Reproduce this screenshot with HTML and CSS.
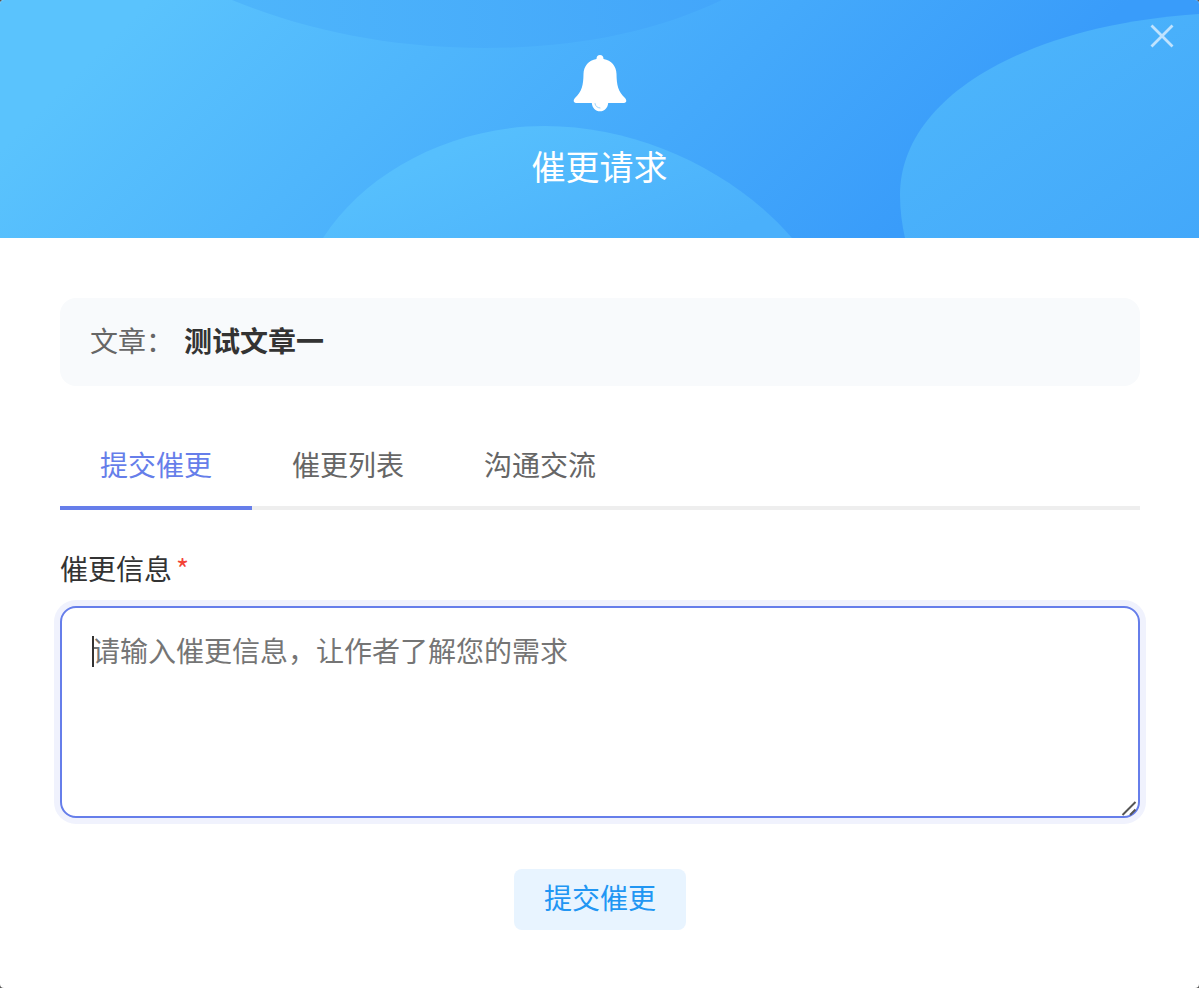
FILE: index.html
```html
<!DOCTYPE html>
<html lang="zh-CN">
<head>
<meta charset="UTF-8">
<meta name="viewport" content="width=device-width, initial-scale=1">
<title>催更请求</title>
<link rel="stylesheet" href="styles.css">
</head>
<body>
<main class="dialog" role="dialog" aria-labelledby="dialog-title">
  <header class="dialog-header">
    <svg class="header-art" viewBox="0 0 1199 238" preserveAspectRatio="none" aria-hidden="true">
      <defs>
        <linearGradient id="sky" gradientUnits="userSpaceOnUse" x1="75" y1="75" x2="565" y2="565">
          <stop offset="0" stop-color="#5ac3fd"/>
          <stop offset="1" stop-color="#399cfa"/>
        </linearGradient>
        <linearGradient id="top-blob" gradientUnits="userSpaceOnUse" x1="240" y1="0" x2="720" y2="0">
          <stop offset="0" stop-color="#4eb5fb"/>
          <stop offset="1" stop-color="#43a6fa"/>
        </linearGradient>
        <linearGradient id="low-blob" gradientUnits="userSpaceOnUse" x1="500" y1="126" x2="580" y2="300">
          <stop offset="0" stop-color="#56bffd"/>
          <stop offset="1" stop-color="#4ab0fb"/>
        </linearGradient>
        <linearGradient id="right-blob" gradientUnits="userSpaceOnUse" x1="980" y1="60" x2="1140" y2="280">
          <stop offset="0" stop-color="#4cb4fb"/>
          <stop offset="1" stop-color="#43a8fa"/>
        </linearGradient>
      </defs>
      <rect width="1199" height="238" fill="url(#sky)"/>
      <path d="M232 0C310 32 395 48 485 48C575 48 655 32 722 0Z" fill="url(#top-blob)"/>
      <path d="M323 238C365 172 452 126 545 126C640 126 735 172 792 238Z" fill="url(#low-blob)"/>
      <path d="M1199 14C1020 26 900 100 900 195C900 210 902 225 905 238H1199Z" fill="url(#right-blob)"/>
    </svg>
    <button class="close" type="button" aria-label="关闭">
      <svg viewBox="0 0 24 24" aria-hidden="true"><path d="M1.500 1.500L22.500 22.500M22.500 1.500L1.500 22.500"/></svg>
    </button>
    <svg class="bell" viewBox="0 0 54 58" aria-hidden="true">
      <path fill="#fff" d="M27 1C29.200 1 30.500 2.500 30.500 5C38.500 6.500 43.300 12 43.500 20C43.700 31 45 37.500 52 44C54.300 46.500 53.200 49 51 49H35.200C34.700 54 31.500 57.300 27 57.300C22.500 57.300 19.300 54 18.800 49H3C.8 49-.3 46.500 2 44C9 37.500 10.300 31 10.500 20C10.700 12 15.500 6.500 23.500 5C23.500 2.500 24.800 1 27 1Z"/>
      <path fill="none" stroke="#9ed4fd" stroke-width="1" stroke-linecap="round" d="M22 49.500C22.300 52.300 24.300 53.700 27 54"/>
    </svg>
    <h1 class="title" id="dialog-title">催更请求</h1>
  </header>

  <div class="dialog-body">
    <p class="article"><span class="article-label">文章：</span><strong class="article-name">测试文章一</strong></p>

    <nav class="tabs" role="tablist">
      <button class="tab tab-active" type="button" role="tab" aria-selected="true">提交催更</button>
      <button class="tab" type="button" role="tab" aria-selected="false">催更列表</button>
      <button class="tab" type="button" role="tab" aria-selected="false">沟通交流</button>
    </nav>

    <form class="form">
      <label class="label" for="message">催更信息<span class="required">*</span></label>
      <div class="field">
        <textarea class="message" id="message" required autofocus placeholder="请输入催更信息，让作者了解您的需求"></textarea>
        <span class="caret" aria-hidden="true"></span>
        <svg class="grip" viewBox="0 0 18 18" aria-hidden="true"><path d="M2.500 16L15.500 3M10 16L15.500 10.500"/></svg>
      </div>
      <button class="submit" type="button">提交催更</button>
    </form>
  </div>
</main>
</body>
</html>
```
FILE: styles.css
```css
* {
  box-sizing: border-box;
}

body {
  margin: 0;
  background: #555;
  color: #333;
  font-family: "Noto Sans CJK SC", sans-serif;
  font-size: 28px;
  line-height: 36px;
}

button,
textarea {
  font: inherit;
}

button {
  border: 0;
  cursor: pointer;
}

.dialog {
  min-height: 100vh;
  overflow: hidden;
  border-radius: 4px;
  background: #fff;
}

.dialog-header {
  position: relative;
  display: flex;
  flex-direction: column;
  align-items: center;
  gap: 32px;
  padding: 54px 24px 50px;
  color: #fff;
}

.header-art {
  position: absolute;
  inset: 0;
  width: 100%;
  height: 100%;
}

.close {
  position: absolute;
  top: 24px;
  right: 25px;
  padding: 0;
  background: none;
}

.close svg {
  display: block;
  width: 24px;
  height: 24px;
  fill: none;
  stroke: #c0e3fe;
  stroke-width: 2.8;
}

.bell {
  position: relative;
  width: 54px;
  height: 58px;
}

.title {
  position: relative;
  margin: 0;
  font-size: 34px;
  font-weight: 400;
  line-height: 44px;
}

.dialog-body {
  padding: 60px 59px 58px 60px;
}

.article {
  display: flex;
  gap: 10px;
  margin: 0;
  padding: 24px 30px 28px;
  border-radius: 16px;
  background: #f8fafc;
}

.article-label {
  color: #666;
}

.article-name {
  font-weight: 700;
}

.tabs {
  display: flex;
  margin-top: 36px;
  box-shadow: inset 0 -4px #eee;
}

.tab {
  padding: 24px 40px;
  border-bottom: 4px solid transparent;
  background: none;
  color: #666;
}

.tab-active {
  border-color: #667eea;
  color: #667eea;
}

.form {
  display: flex;
  flex-direction: column;
  margin-top: 40px;
}

.label {
  margin-bottom: 20px;
}

.required {
  margin-left: 4px;
  color: #f44336;
}

.field {
  position: relative;
  display: flex;
}

.message {
  width: 100%;
  height: 212px;
  padding: 24px 30px;
  border: 2px solid #667eea;
  border-radius: 16px;
  outline: 0;
  box-shadow: 0 0 0 6px #f0f2fd;
  background: #fff;
  color: #333;
  caret-color: transparent;
  resize: none;
}

.message::placeholder {
  color: #757575;
  opacity: 1;
}

.caret {
  position: absolute;
  top: 30px;
  left: 32px;
  width: 2px;
  height: 31px;
  background: #333;
}

.grip {
  position: absolute;
  right: 2px;
  bottom: 1px;
  width: 18px;
  height: 18px;
  fill: none;
  stroke: #555;
  stroke-width: 2;
  pointer-events: none;
}

.submit {
  align-self: center;
  margin-top: 51px;
  padding: 10px 30px 15px;
  border-radius: 8px;
  background: #e8f4ff;
  color: #2196f3;
}
```
